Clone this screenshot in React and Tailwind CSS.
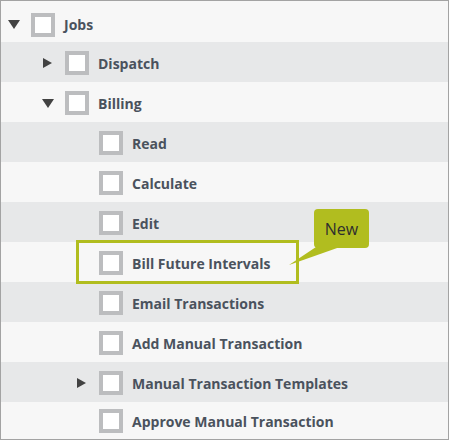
const rows = [
  { label: 'Jobs', level: 0, toggle: 'down' },
  { label: 'Dispatch', level: 1, toggle: 'right' },
  { label: 'Billing', level: 1, toggle: 'down' },
  { label: 'Read', level: 2 },
  { label: 'Calculate', level: 2 },
  { label: 'Edit', level: 2 },
  { label: 'Bill Future Intervals', level: 2 },
  { label: 'Email Transactions', level: 2 },
  { label: 'Add Manual Transaction', level: 2 },
  { label: 'Manual Transaction Templates', level: 2, toggle: 'right' },
  { label: 'Approve Manual Transaction', level: 2 },
]

const indent = ['pl-[6px]', 'pl-[40px]', 'pl-[74px]']

function Toggle({ dir }) {
  if (dir === 'down') {
    return (
      <svg width="12" height="9" viewBox="0 0 12 9" className="ml-[1px]">
        <polygon points="0,0 12,0 6,9" fill="#424242" />
      </svg>
    )
  }
  if (dir === 'right') {
    return (
      <svg width="9" height="10" viewBox="0 0 9 10" className="ml-[2px]">
        <polygon points="0,0 9,5 0,10" fill="#424242" />
      </svg>
    )
  }
  return null
}

export default function App() {
  return (
    <div className="relative w-[449px] h-[440px] border border-[#a3a3a3] bg-[#f7f7f7] flex flex-col overflow-hidden font-['Open_Sans',sans-serif]">
      {rows.map((row, i) => (
        <div
          key={row.label}
          className={`flex items-center ${indent[row.level]} ${
            i === 0 ? 'h-[41px] pt-[6px]' : i === rows.length - 1 ? 'flex-1 pt-[1px]' : 'h-10 pt-[2px]'
          } ${i % 2 === 1 ? 'bg-[#e7e8e9]' : 'bg-[#f7f7f7]'}`}
        >
          <div className="w-6 flex items-center">
            <Toggle dir={row.toggle} />
          </div>
          <div className="w-6 h-6 border-4 border-[#bcbdbf] bg-white" />
          <span className="ml-[9px] text-[14px] font-bold text-[#4a525d]">{row.label}</span>
        </div>
      ))}

      {/* highlight for the new permission */}
      <div className="absolute left-[75px] top-[239px] w-[223px] h-[44px] border-[3px] border-[#b1bd1f]" />

      {/* callout */}
      <svg className="absolute left-[287px] top-[244px]" width="54" height="22" viewBox="0 0 54 22">
        <polygon points="1,20 28,2 52,2" fill="#b1bd1f" />
      </svg>
      <div className="absolute left-[313px] top-[208px] w-[55px] h-[39px] rounded-[4px] bg-[#b1bd1f] flex items-center justify-center text-[16px] text-[#2e2e2e]">
        New
      </div>
    </div>
  )
}
